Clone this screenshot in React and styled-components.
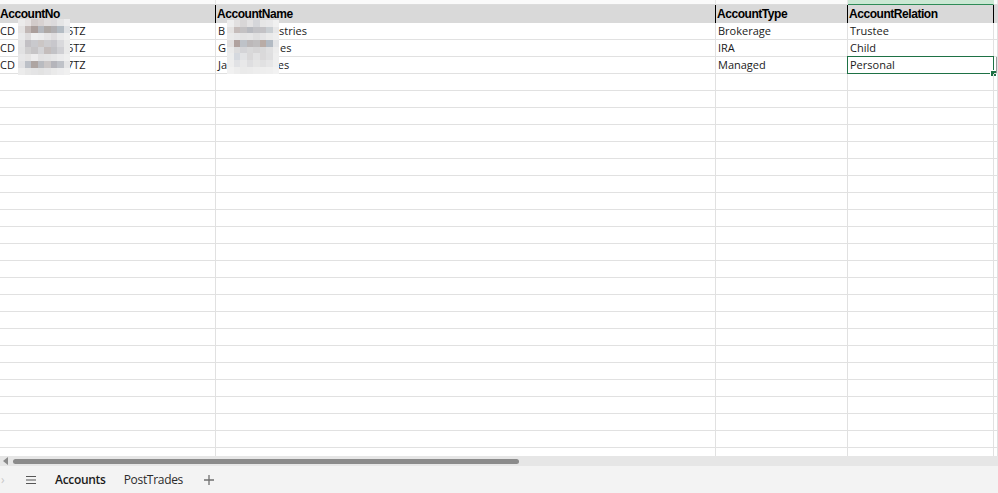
import styled, { createGlobalStyle } from 'styled-components';

const GlobalStyle = createGlobalStyle`
  html, body { margin: 0; padding: 0; background: #ffffff; }
  body { font-family: "Open Sans", "Noto Sans", sans-serif; color: #1f1f1f; overflow: hidden; }
`;

const columns = [
  { key: 'no', title: 'AccountNo' },
  { key: 'name', title: 'AccountName' },
  { key: 'type', title: 'AccountType' },
  { key: 'rel', title: 'AccountRelation' },
];

// [visible start, visible end, hidden gap in px]
const rows = [
  { no: ['CD', '5TZ', 52], name: ['B', 'stries', 54], type: 'Brokerage', rel: 'Trustee' },
  { no: ['CD', '6TZ', 52], name: ['G', 'es', 54], type: 'IRA', rel: 'Child' },
  { no: ['CD', '7TZ', 52], name: ['Ja', 'ies', 48], type: 'Managed', rel: 'Personal' },
];

const EMPTY_ROWS = 24;

const mosaicA = [
  '#ecebeb', '#e6e2e2', '#d2cbca', '#d8d2d1', '#e0dddd', '#dcdadc', '#e5e5e6', '#ededee',
  '#e4e2e2', '#c2b8b6', '#ab9f9c', '#b5b8be', '#afa9a6', '#b1afb2', '#b4bcc4', '#dfe1e4',
  '#e9e9ea', '#dedcdd', '#efeff0', '#ececed', '#e6e5e6', '#dfdddf', '#e9e9ea', '#efefef',
  '#e3e3e4', '#c2c0c4', '#c9c9cd', '#cbc6c5', '#cdcccf', '#c8c7cc', '#d9d9dc', '#e9e9e9',
  '#e1e1e2', '#cfcecf', '#c6c4c6', '#d3d3d6', '#c4bdbc', '#c2c2c6', '#d0d0d4', '#e9e9e9',
  '#e7e7e8', '#e5e4e4', '#edeced', '#e2e1e2', '#e3e3e4', '#e6e6e7', '#ebebec', '#efefef',
  '#e1e1e3', '#bcc0c7', '#aea5a2', '#b9bbc0', '#cac6c6', '#b5b5bb', '#bfc2c8', '#e5e5e6',
  '#ececec', '#e7e7e7', '#e4e4e5', '#e2e2e2', '#e5e5e6', '#eaeaea', '#ededee', '#f0f0f0',
];

const mosaicB = [
  '#eeeeee', '#e2e0e0', '#d8d6d7', '#e3e2e3', '#d5d6da', '#e6e6e6', '#e8e8e9', '#f0f0f0',
  '#e5e3e2', '#c5bcba', '#c3c1c3', '#b8bac0', '#c2c2c6', '#c3c2c5', '#cacfd3', '#e7e7e8',
  '#eaeaea', '#e6e6e7', '#e3e3e4', '#e5e5e6', '#dfdfe0', '#e4e4e5', '#eaeaea', '#eeeeee',
  '#e1dfdf', '#b0a29f', '#bec2c8', '#bcb8b9', '#bfbdbe', '#b9aca6', '#b2bac3', '#e3e4e6',
  '#eaeaea', '#dcdcdd', '#d4d4d7', '#d9d9da', '#d6d5d6', '#d9d9da', '#e0e0e1', '#ececec',
  '#eceded', '#d5d9df', '#e2e3e5', '#d9d8d9', '#e2e2e3', '#dad9da', '#dfdfe0', '#eeeeee',
  '#eeeeee', '#e1e2e5', '#e8e8e9', '#dedee0', '#e5e5e5', '#e1e1e2', '#e6e6e7', '#efefef',
  '#f1f1f1', '#ededed', '#eaeaea', '#ebebeb', '#ededed', '#eeeeee', '#efefef', '#f2f2f2',
];

const Page = styled.div`
  width: 998px;
  height: 493px;
  display: flex;
  flex-direction: column;
  overflow: hidden;
`;

const SheetArea = styled.div`
  position: relative;
  height: 456px;
  overflow: hidden;
`;

const Grid = styled.div`
  display: grid;
  grid-template-columns: 216px 500px 132px 146px 1fr;
  grid-template-rows: 5px 18px;
  grid-auto-rows: 17px;
`;

const TopCell = styled.div`
  box-sizing: border-box;
  height: 5px;
  background: ${(p) => (p.$active ? '#cbe8d4' : '#fafafa')};
  border-bottom: 1px solid ${(p) => (p.$active ? '#2e8b57' : '#dcdcdc')};
  border-right: 1px solid ${(p) => (p.$active ? '#cbe8d4' : '#e6e6e6')};
`;

const HeadCell = styled.div`
  box-sizing: border-box;
  height: 18px;
  background: #d9d9d9;
  border-right: 1px solid ${(p) => (p.$last ? '#d9d9d9' : '#000000')};
  padding: 2px 0 0 ${(p) => (p.$first ? '0' : '1px')};
  font-family: "Liberation Sans", Arial, sans-serif;
  font-weight: bold;
  font-size: 12px;
  letter-spacing: -0.45px;
  line-height: 14px;
  color: #000000;
  white-space: nowrap;
  overflow: hidden;
`;

const Cell = styled.div`
  position: relative;
  box-sizing: border-box;
  height: 17px;
  border-right: 1px solid #e1e1e1;
  border-bottom: 1px solid #e1e1e1;
  padding: 0 0 0 ${(p) => (p.$first ? '0' : '2px')};
  font-size: 11px;
  line-height: 16px;
  color: #1a1a1a;
  white-space: nowrap;
  overflow: ${(p) => (p.$selected ? 'visible' : 'hidden')};
`;

const Gap = styled.span`
  display: inline-block;
  width: ${(p) => p.$w}px;
`;

const Selection = styled.div`
  position: absolute;
  left: -1px;
  top: -1px;
  right: -1px;
  bottom: -1px;
  border: 1px solid #1e7145;
  pointer-events: none;
`;

const FillHandle = styled.div`
  position: absolute;
  right: -4px;
  bottom: -4px;
  width: 5px;
  height: 5px;
  background: #1e7145;
  border: 1px solid #ffffff;
`;

const QuickBox = styled.div`
  position: absolute;
  left: 2px;
  top: 0;
  width: 8px;
  height: 14px;
  border: 1px solid #9a9a9a;
  background: #ffffff;
`;

const Mosaic = styled.div`
  position: absolute;
  left: ${(p) => p.$left}px;
  top: ${(p) => p.$top}px;
  display: grid;
  grid-template-columns: repeat(8, 6.5px);
  grid-auto-rows: ${(p) => p.$rowH}px;
`;

const Tile = styled.div`
  background: ${(p) => p.$c};
`;

const ScrollBar = styled.div`
  height: 10px;
  background: #e6e6e6;
  display: flex;
  align-items: center;
  gap: 5px;
  padding-left: 3px;
`;

const ArrowLeft = styled.div`
  width: 0;
  height: 0;
  border-top: 4px solid transparent;
  border-bottom: 4px solid transparent;
  border-right: 5px solid #8a8a8a;
`;

const Thumb = styled.div`
  width: 506px;
  height: 5px;
  border-radius: 3px;
  background: #8b8b8b;
`;

const TabBar = styled.div`
  flex: 1;
  background: #f3f3f3;
  display: flex;
  align-items: center;
  padding-left: 1px;
`;

const NavArrow = styled.span`
  color: #c8c8c8;
  font-size: 12px;
  width: 24px;
  display: flex;
  align-items: center;
`;

const MenuIcon = styled.svg`
  margin-right: 18px;
`;

const Tab = styled.div`
  font-family: "Open Sans", "Noto Sans", sans-serif;
  font-size: 12px;
  letter-spacing: -0.3px;
  font-weight: ${(p) => (p.$active ? 600 : 400)};
  color: ${(p) => (p.$active ? '#1b1b1b' : '#2b2b2b')};
  margin-right: 18px;
`;

const AddIcon = styled.svg`
  margin-left: 2px;
`;

const renderValue = (row, key) => {
  const v = row[key];
  if (Array.isArray(v)) {
    return (
      <>
        {v[0]}
        <Gap $w={v[2]} />
        {v[1]}
      </>
    );
  }
  return v;
};

const App = () => {
  return (
    <>
      <GlobalStyle />
      <Page>
        <SheetArea>
          <Grid>
            {[0, 1, 2, 3, 4].map((i) => (
              <TopCell key={'t' + i} $active={i === 3} />
            ))}
            {columns.map((c, i) => (
              <HeadCell key={c.key} $first={i === 0}>
                {c.title}
              </HeadCell>
            ))}
            <HeadCell $last />
            {rows.map((row, r) =>
              [...columns, { key: 'extra' }].map((c, i) => {
                const selected = r === 2 && c.key === 'rel';
                return (
                  <Cell key={r + c.key} $first={i === 0} $selected={selected}>
                    {c.key !== 'extra' && renderValue(row, c.key)}
                    {selected && (
                      <Selection>
                        <FillHandle />
                      </Selection>
                    )}
                    {r === 2 && c.key === 'extra' && <QuickBox />}
                  </Cell>
                );
              })
            )}
            {Array.from({ length: EMPTY_ROWS }).map((_, r) =>
              [0, 1, 2, 3, 4].map((i) => <Cell key={'e' + r + '-' + i} />)
            )}
          </Grid>
          <Mosaic $left={18} $top={19} $rowH={7}>
            {mosaicA.map((c, i) => (
              <Tile key={i} $c={c} />
            ))}
          </Mosaic>
          <Mosaic $left={227} $top={20} $rowH={6.7}>
            {mosaicB.map((c, i) => (
              <Tile key={i} $c={c} />
            ))}
          </Mosaic>
        </SheetArea>
        <ScrollBar>
          <ArrowLeft />
          <Thumb />
        </ScrollBar>
        <TabBar>
          <NavArrow>›</NavArrow>
          <MenuIcon width="12" height="10" viewBox="0 0 12 10">
            <path d="M1 1.5h10M1 5h10M1 8.5h10" stroke="#555" strokeWidth="1.1" />
          </MenuIcon>
          <Tab $active>Accounts</Tab>
          <Tab>PostTrades</Tab>
          <AddIcon width="12" height="12" viewBox="0 0 12 12">
            <path d="M6 1v10M1 6h10" stroke="#707070" strokeWidth="1.3" />
          </AddIcon>
        </TabBar>
      </Page>
    </>
  );
};

export default App;
